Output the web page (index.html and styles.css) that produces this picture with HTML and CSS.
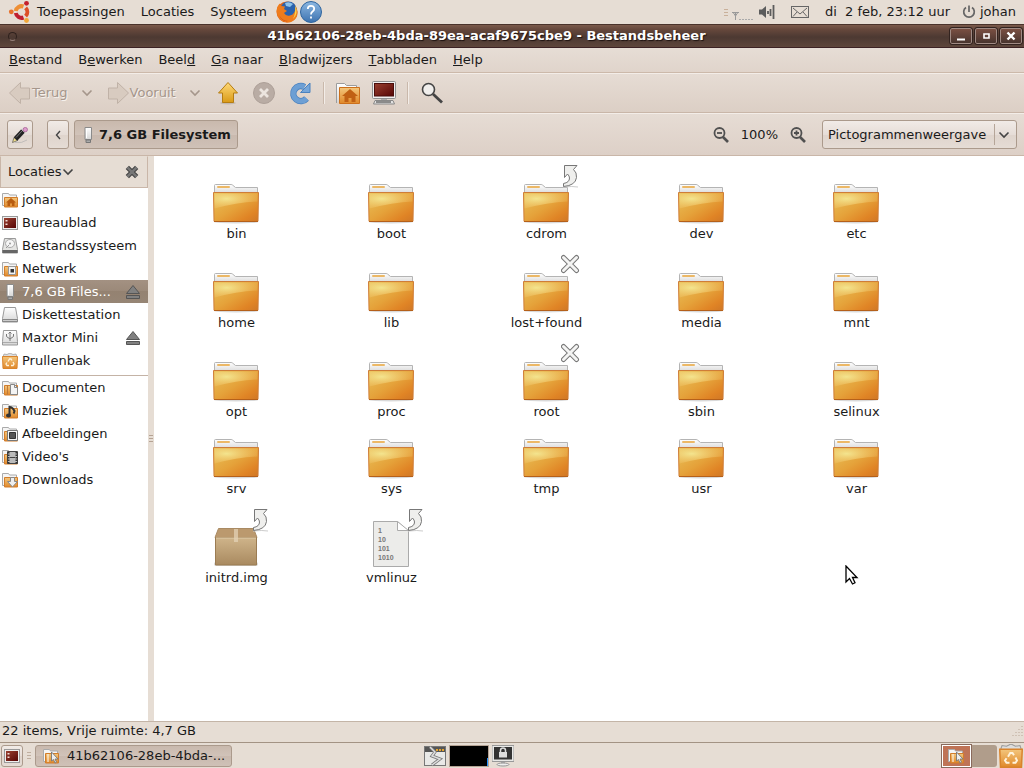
FILE: index.html
```html
<!DOCTYPE html>
<html lang="nl">
<head>
    <meta charset="UTF-8">
    <meta name="viewport" content="width=device-width, initial-scale=1.0">
    <title>Bestandsbeheer</title>
    <link rel="stylesheet" href="styles.css">
</head>
<body>
    <!-- shared icons -->
    <svg class="defs" aria-hidden="true">
        <defs>
            <linearGradient id="gFolder" x1="0" y1="0" x2="1" y2="1">
                <stop offset="0" stop-color="#e9c25a"/>
                <stop offset="0.5" stop-color="#e5a23a"/>
                <stop offset="0.8" stop-color="#e08425"/>
                <stop offset="1" stop-color="#cf7726"/>
            </linearGradient>
            <radialGradient id="gShine" cx="0.28" cy="0.35" r="0.75">
                <stop offset="0" stop-color="#f4e792" stop-opacity="0.95"/>
                <stop offset="1" stop-color="#f2c46a" stop-opacity="0.25"/>
            </radialGradient>
            <linearGradient id="gPaper" x1="0" y1="0" x2="0" y2="1">
                <stop offset="0" stop-color="#ffffff"/>
                <stop offset="1" stop-color="#d6d6d6"/>
            </linearGradient>
            <linearGradient id="gOrange" x1="0" y1="0" x2="0" y2="1">
                <stop offset="0" stop-color="#f3c67c"/>
                <stop offset="1" stop-color="#e0882a"/>
            </linearGradient>
            <linearGradient id="gBox" x1="0" y1="0" x2="0" y2="1">
                <stop offset="0" stop-color="#cfb48a"/>
                <stop offset="1" stop-color="#a98a60"/>
            </linearGradient>
            <linearGradient id="gRed" x1="0" y1="0" x2="1" y2="1">
                <stop offset="0" stop-color="#9a4030"/>
                <stop offset="1" stop-color="#560505"/>
            </linearGradient>
            <linearGradient id="gGold" x1="0" y1="0" x2="0" y2="1">
                <stop offset="0" stop-color="#ffd978"/>
                <stop offset="1" stop-color="#d99a17"/>
            </linearGradient>
            <linearGradient id="gBlue" x1="0" y1="0" x2="0" y2="1">
                <stop offset="0" stop-color="#8db8e2"/>
                <stop offset="1" stop-color="#3d73b0"/>
            </linearGradient>
        </defs>

        <symbol id="folder" viewBox="1 0 48 48">
            <ellipse cx="24" cy="46" rx="22" ry="1.500" fill="#000" opacity="0.15"/>
            <path d="M2.500 18V9.500q0-1 1-1h15.500q1 0 1.500.5l3 2.500h22v7z" fill="url(#gPaper)" stroke="#b4b4b4"/>
            <rect x="5" y="10" width="13" height="2" rx="1" fill="#ecb866"/>
            <path d="M1.500 16.500h45l-.5 28.500q0 .5-.5.500h-43q-.5 0-.5-.5z" fill="url(#gFolder)" stroke="#cf7d38"/>
            <path d="M2.500 17.500h43v8q-20 1-43 7z" fill="url(#gShine)"/>
            <path d="M2 45.500h44" stroke="#b5601a"/>
        </symbol>
        <symbol id="emblemLink" viewBox="0 0 24 24">
            <path d="M2 23q10-1 15 0" stroke="#ccc" fill="none"/>
            <path d="M3.500 1.500h12.500l-3.500 4q3.500 3 3 8-1 8-13 9v-3q6-1 6-5.500 0-2-2-4l-3 3.500z" fill="#efefed" stroke="#777" stroke-linejoin="round"/>
        </symbol>
        <symbol id="emblemNo" viewBox="0 0 24 24">
            <path d="M2.500 4.500l13 13M15.500 4.500l-13 13" stroke="#777" stroke-width="5" stroke-linecap="round"/>
            <path d="M2.500 4.500l13 13M15.500 4.500l-13 13" stroke="#f4f4f3" stroke-width="3" stroke-linecap="round"/>
        </symbol>
        <symbol id="box" viewBox="1 0 48 48">
            <rect x="2" y="42" width="44" height="4" rx="2" fill="#000" opacity="0.15"/>
            <path d="M6.500 8.500h35l3.500 9H3z" fill="#bb996e" stroke="#a98a63"/>
            <path d="M3.500 17.500h41v27.500h-41z" fill="url(#gBox)" stroke="#9b7c53"/>
            <path d="M4 18h40" stroke="#e0cca9"/>
            <path d="M22 9h4v13h-4z" fill="#e3d2b5" opacity="0.75"/>
        </symbol>

        <symbol id="chevron" viewBox="0 0 12 12">
            <path d="M1.500 3.500L6 8l4.500-4.500" fill="none" stroke="currentColor" stroke-width="1.600"/>
        </symbol>
        <symbol id="eject" viewBox="0 0 16 16">
            <path d="M8 1.500L14.500 9.500h-13zM1.500 11.500h13v3h-13z" fill="#808080" stroke="#555"/>
        </symbol>
        <symbol id="miniFolder" viewBox="0 0 16 16">
            <path d="M.5 13.500v-12h6l1 1.500h7v10.500z" fill="#f5f5f5" stroke="#aaa"/>
            <path d="M2.500 5.500h13v9.500h-13z" fill="url(#gOrange)" stroke="#d27d2b"/>
        </symbol>
        <symbol id="home" viewBox="0 0 16 16">
            <use href="#miniFolder"/>
            <path d="M9 6l5 4.500h-1.500V14h-2.500v-2.500H8V14H5.500v-3.500H4z" fill="#b85c10"/>
        </symbol>
        <symbol id="desktop" viewBox="0 0 16 16">
            <rect x=".5" y="1.500" width="15" height="13" fill="#eee" stroke="#999"/>
            <rect x="2" y="3" width="12" height="10" fill="url(#gRed)"/>
            <path d="M3.500 5h2v1.500h-2zM3.500 8.500h2V10h-2z" fill="#f0dcd6"/>
        </symbol>
        <symbol id="disk" viewBox="0 0 16 16">
            <path d="M2.500.5h11l2 11v3.500H.5v-3.500z" fill="#e4e4e2" stroke="#999"/>
            <ellipse cx="8" cy="5.500" rx="4.500" ry="4" fill="#f6f6f6" stroke="#aaa"/>
            <circle cx="8" cy="5.500" r="1" fill="#999"/>
            <path d="M4 10l3-3" stroke="#999"/>
            <path d="M.5 12h15v3H.5z" fill="#666"/>
        </symbol>
        <symbol id="network" viewBox="0 0 16 16">
            <use href="#miniFolder"/>
            <path d="M6.500 5.500h7v8h-7z" fill="#f4f4f4" stroke="#999"/>
            <path d="M8.500 8h3.500v3.500H8.500z" fill="#333"/>
        </symbol>
        <symbol id="usb" viewBox="0 0 16 16">
            <path d="M5 .5h6.500v12H5z" fill="url(#gPaper)" stroke="#8b8b8b"/>
            <path d="M6 13h4.500v2.500H6z" fill="#aaa" stroke="#777"/>
            <path d="M6.500 2v9" stroke="#fff"/>
        </symbol>
        <symbol id="floppy" viewBox="0 0 16 16">
            <path d="M2.500.5h11l2 11v3.500H.5v-3.500z" fill="url(#gPaper)" stroke="#999"/>
            <path d="M.5 12.500h15v2H.5z" fill="#ccc" stroke="#888"/>
        </symbol>
        <symbol id="usbDisk" viewBox="0 0 16 16">
            <path d="M1.500.5h13l1 11v3.500H.5v-3.500z" fill="url(#gPaper)" stroke="#999"/>
            <path d="M8 11V2.500M4.500 4v2.500L8 9l3.500-2.500V4M6.500 3.500L8 2l1.500 1.500" fill="none" stroke="#777"/>
            <path d="M1 12.500h14" stroke="#aaa"/>
        </symbol>
        <symbol id="trash" viewBox="0 0 16 16">
            <path d="M1 4L2 1l3 .5L8 0l3 1.500L14 1l1 3z" fill="#ddd" stroke="#999" stroke-width=".7"/>
            <path d="M.5 3.500h15l-.5 12H1z" fill="url(#gOrange)" stroke="#d9842c"/>
            <path d="M6 8.500l1.500-2.500h1.500l1 1.500M11 9l1 2-1 1.500H9M7 12.500H5L4 11l1-1.500" fill="none" stroke="#fff3dc" stroke-width="1.300"/>
        </symbol>
        <symbol id="documents" viewBox="0 0 16 16">
            <use href="#miniFolder"/>
            <path d="M5.500 5.500v9" stroke="#c07a3a"/>
            <path d="M8.500 4.500h4l3 3v7h-7z" fill="#f4f4f4" stroke="#888"/>
            <path d="M12.500 4.500v3h3" fill="none" stroke="#888"/>
        </symbol>
        <symbol id="music" viewBox="0 0 16 16">
            <use href="#miniFolder"/>
            <path d="M7.500 12.500V4q3 0 5 4-.5 2-1 2.500" fill="none" stroke="#333" stroke-width="2"/>
            <ellipse cx="6.500" cy="12.500" rx="2.500" ry="2" fill="#333"/>
        </symbol>
        <symbol id="pictures" viewBox="0 0 16 16">
            <use href="#miniFolder"/>
            <path d="M5.500 4.500h10v10h-10z" fill="#f4f4f4" stroke="#777"/>
            <path d="M7.500 6.500h6v6h-6z" fill="#555" stroke="#333"/>
        </symbol>
        <symbol id="videos" viewBox="0 0 16 16">
            <use href="#miniFolder"/>
            <path d="M5.500 2.500h10v12h-10z" fill="#bbb" stroke="#444"/>
            <path d="M6.500 3v12M14.500 3v12" stroke="#333" stroke-width="2" stroke-dasharray="1.500 1"/>
            <path d="M8 8.500h5" stroke="#444"/>
        </symbol>
        <symbol id="downloads" viewBox="0 0 16 16">
            <use href="#miniFolder"/>
            <path d="M8.500 5.500h4v4h3l-5 5.500-5-5.500h3z" fill="#eee" stroke="#888"/>
        </symbol>
        <symbol id="fileTask" viewBox="0 0 16 16">
            <use href="#miniFolder"/>
            <path d="M5 6v8" stroke="#fff"/>
            <path d="M8.500 4v9l2-1.500 1.500 3.500 1.500-.8-1.500-3.200h3z" fill="#eee" stroke="#777" stroke-width=".9"/>
        </symbol>
    </svg>

    <header class="panel top-panel">
        <nav class="panel-menu">
            <svg class="icon-24" viewBox="0 0 24 24" aria-hidden="true">
                <g fill="none" stroke-width="4">
                    <path d="M7.800 11A5.800 5.800 0 0 1 15.500 6.500" stroke="#ee8f35"/>
                    <path d="M17.600 7.900A5.800 5.800 0 0 1 17.600 16.100" stroke="#dd4f26"/>
                    <path d="M15.500 17.500A5.800 5.800 0 0 1 7.800 13" stroke="#c01f30"/>
                </g>
                <circle cx="3.300" cy="11.800" r="2.400" fill="#e8702a"/>
                <circle cx="18.500" cy="3.300" r="2.400" fill="#c4202c"/>
                <circle cx="18.500" cy="20.500" r="2.400" fill="#f2a83a"/>
            </svg>
            <button class="menu-item">Toepassingen</button>
            <button class="menu-item">Locaties</button>
            <button class="menu-item">Systeem</button>
            <button class="launcher" aria-label="Firefox">
                <svg class="icon-24" viewBox="0 0 24 24" aria-hidden="true">
                    <circle cx="12" cy="12" r="10.500" fill="#e0661a"/>
                    <circle cx="13.500" cy="9.500" r="8" fill="#2c62ac"/>
                    <path d="M10 3q4-2 8 1l-3 3-4-1z" fill="#8fc2e8"/>
                    <path d="M1.500 11Q2 6 4.500 3.500L6 6l4 .5-1 2.500 3 2-3 2q2 3.500 6 2.500 5-1 5.500-8 3 4 1.500 9-3 6-10 6-9-1-10.500-11.500z" fill="#ef7c1c"/>
                    <path d="M20 5q4 8-2 14 3-6 2-14z" fill="#fbd34a"/>
                    <path d="M4 15q3 6 9 6-6 1-9-6z" fill="#b8321a"/>
                </svg>
            </button>
            <button class="launcher" aria-label="Help">
                <svg class="icon-24" viewBox="0 0 24 24" aria-hidden="true">
                    <circle cx="12" cy="12" r="10.500" fill="url(#gBlue)" stroke="#2f659f"/>
                    <path d="M8.800 9q0-3.200 3.200-3.200t3.200 3q0 1.700-1.600 2.700T12 14.500M12 16.500v2" fill="none" stroke="#fff" stroke-width="1.800"/>
                </svg>
            </button>
        </nav>
        <div class="tray">
            <svg class="tray-net" viewBox="0 0 32 24" aria-hidden="true">
                <path d="M1 9.500h4M1 12.500h4M1 15.500h4" stroke="#c9b09a"/>
                <path d="M9 12.500h7M10.500 13l2 3 2-3M12.500 12v8" fill="none" stroke="#999"/>
                <path d="M16 19.500h14" stroke="#aaa" stroke-dasharray="2 1"/>
            </svg>
            <svg class="icon-16" viewBox="0 0 16 16" aria-hidden="true">
                <path d="M0 5.500h3L7 2v12L3 10.500H0z" fill="#5c5c5c"/>
                <path d="M9 7v3M11.500 5v7M14.500 1v14" stroke="#5c5c5c" stroke-width="1.800"/>
            </svg>
            <svg class="tray-mail" viewBox="0 0 18 12" aria-hidden="true">
                <rect x=".5" y=".5" width="17" height="11" fill="none" stroke="#666"/>
                <path d="M2 2l7 6 7-6M2 10.500l4-4.500M16 10.500L12 6" fill="none" stroke="#666"/>
            </svg>
            <time class="clock">di  2 feb, 23:12 uur</time>
            <button class="user-menu">
                <svg class="user-icon" viewBox="0 0 14 14" aria-hidden="true">
                    <path d="M4 2.500a5.300 5.300 0 1 0 6 0M7 .5v6.500" fill="none" stroke="#666" stroke-width="1.700"/>
                </svg>
                johan
            </button>
        </div>
    </header>

    <div class="window">
        <div class="title-bar">
            <span class="title-dot"></span>
            <h1>41b62106-28eb-4bda-89ea-acaf9675cbe9 - Bestandsbeheer</h1>
            <div class="window-buttons">
                <button aria-label="Minimaliseren"><svg viewBox="0 0 20 14"><path d="M6 10.500h8" stroke="#fff" stroke-width="2"/></svg></button>
                <button aria-label="Maximaliseren"><svg viewBox="0 0 20 14"><path d="M8 5h5v4H8z" fill="none" stroke="#fff" stroke-width="1.600"/></svg></button>
                <button aria-label="Sluiten"><svg viewBox="0 0 20 14"><path d="M6.500 3.500l7 7M13.500 3.500l-7 7" stroke="#fff" stroke-width="2.400"/></svg></button>
            </div>
        </div>

        <nav class="menu-bar">
            <button class="menu-item"><u>B</u>estand</button>
            <button class="menu-item">B<u>e</u>werken</button>
            <button class="menu-item">Beel<u>d</u></button>
            <button class="menu-item"><u>G</u>a naar</button>
            <button class="menu-item"><u>B</u>ladwijzers</button>
            <button class="menu-item"><u>T</u>abbladen</button>
            <button class="menu-item"><u>H</u>elp</button>
        </nav>

        <div class="tool-bar">
            <button class="nav-button" disabled>
                <svg class="icon-24" viewBox="0 0 24 24" aria-hidden="true">
                    <path d="M1.500 12L12.500 1.500v5.500h9v11h-9V22.500z" fill="#d8cbc0" stroke="#c0b2a7"/>
                </svg>
                Terug
            </button>
            <button class="drop-button" aria-label="Terug-geschiedenis" disabled><svg class="icon-12"><use href="#chevron"/></svg></button>
            <button class="nav-button" disabled>
                <svg class="icon-24" viewBox="0 0 24 24" aria-hidden="true">
                    <path d="M22.500 12L11.500 1.500v5.500h-9v11h9V22.500z" fill="#d8cbc0" stroke="#c0b2a7"/>
                </svg>
                Vooruit
            </button>
            <button class="drop-button" aria-label="Vooruit-geschiedenis" disabled><svg class="icon-12"><use href="#chevron"/></svg></button>
            <button class="tool-button" aria-label="Omhoog">
                <svg class="icon-24" viewBox="0 0 24 24" aria-hidden="true">
                    <ellipse cx="12" cy="22" rx="8" ry="1.500" opacity="0.12"/>
                    <path d="M12 1.500l9.500 10.500h-4v9.500h-11V12h-4z" fill="url(#gGold)" stroke="#b57d12" stroke-linejoin="round"/>
                </svg>
            </button>
            <button class="tool-button" aria-label="Stoppen" disabled>
                <svg class="icon-24" viewBox="0 0 24 24" aria-hidden="true">
                    <circle cx="12" cy="12" r="10.500" fill="#b9aca4" stroke="#ada098"/>
                    <path d="M8 8l8 8M16 8l-8 8" stroke="#ece5df" stroke-width="2.800"/>
                </svg>
            </button>
            <button class="tool-button" aria-label="Herladen">
                <svg class="icon-24" viewBox="0 0 24 24" aria-hidden="true">
                    <path d="M18.500 17.500A7.500 7.500 0 1 1 16.500 6" fill="none" stroke="#4b82bf" stroke-width="6.500"/>
                    <path d="M18.500 17.500A7.500 7.500 0 1 1 16.500 6" fill="none" stroke="#6d9fd4" stroke-width="5"/>
                    <path d="M22 2v9.500h-9.500z" fill="#76a6d9" stroke="#4b82bf"/>
                </svg>
            </button>
            <span class="separator"></span>
            <button class="tool-button" aria-label="Persoonlijke map">
                <svg class="icon-24" viewBox="0 0 24 24" aria-hidden="true">
                    <path d="M.5 22V2.500h8l2 2h10v4" fill="url(#gPaper)" stroke="#9c9c9c"/>
                    <path d="M3.500 6.500h20v16h-20z" fill="url(#gOrange)" stroke="#cc701c"/>
                    <path d="M14 8l8 7h-2.500v6h-4v-4h-3v4h-4v-6H6z" fill="#c06014"/>
                </svg>
            </button>
            <button class="tool-button" aria-label="Computer">
                <svg class="icon-24" viewBox="0 0 24 24" aria-hidden="true">
                    <rect x=".5" y=".5" width="23" height="17" rx="1" fill="#efefef" stroke="#8f8f8f"/>
                    <rect x="2.500" y="2.500" width="19" height="12.500" fill="url(#gRed)" stroke="#4b0d0a"/>
                    <path d="M9 18h6v2H9z" fill="#aaa"/>
                    <path d="M3 19.500h18l1.500 3.500h-21z" fill="#e3e3e3" stroke="#888"/>
                    <path d="M4 21h15" stroke="#333"/>
                </svg>
            </button>
            <span class="separator"></span>
            <button class="tool-button" aria-label="Zoeken">
                <svg class="icon-24" viewBox="0 0 24 24" aria-hidden="true">
                    <path d="M13 13l9 8.500" stroke="#444" stroke-width="2.800"/>
                    <circle cx="8.500" cy="8.500" r="6" fill="#f0eeec" stroke="#444" stroke-width="1.600"/>
                </svg>
            </button>
        </div>

        <div class="location-bar">
            <button class="raised edit-button" aria-label="Locatie bewerken">
                <svg class="icon-16" viewBox="0 0 16 16" aria-hidden="true">
                    <path d="M3 15.500q7 1 12-2.500" stroke="#aaa" fill="none" opacity=".6"/>
                    <path d="M.5 15.500L2 10.500l3.500 3z" fill="#f2e08a" stroke="#555" stroke-width=".7"/>
                    <path d="M3.500 12L11 4" stroke="#222" stroke-width="4.800"/>
                    <path d="M4 10.500l6.500-7" stroke="#777"/>
                    <path d="M11 4l1-1.200" stroke="#ddd" stroke-width="4.500"/>
                    <circle cx="13.300" cy="2.600" r="2.200" fill="#dc9ccb" stroke="#a0578f" stroke-width=".7"/>
                </svg>
            </button>
            <button class="raised step-button" aria-label="Vorige map">
                <svg class="icon-12" viewBox="0 0 12 12" aria-hidden="true"><path d="M8 2L4.500 6 8 10" fill="none" stroke="#444" stroke-width="1.400"/></svg>
            </button>
            <button class="raised pressed path-button">
                <svg class="icon-16"><use href="#usb"/></svg>
                7,6 GB Filesystem
            </button>
            <div class="zoom">
                <button aria-label="Uitzoomen"><svg class="icon-16" viewBox="0 0 16 16"><path d="M10 10l5 5" stroke="#505050" stroke-width="2.600"/><circle cx="6.500" cy="6" r="5" fill="none" stroke="#505050" stroke-width="1.800"/><path d="M4 6h5" stroke="#505050" stroke-width="1.800"/></svg></button>
                <output>100%</output>
                <button aria-label="Inzoomen"><svg class="icon-16" viewBox="0 0 16 16"><path d="M10 10l5 5" stroke="#505050" stroke-width="2.600"/><circle cx="6.500" cy="6" r="5" fill="none" stroke="#505050" stroke-width="1.800"/><path d="M4 6h5M6.500 3.500v5" stroke="#505050" stroke-width="1.800"/></svg></button>
            </div>
            <div class="raised view-select">
                <select aria-label="Weergave">
                    <option>Pictogrammenweergave</option>
                    <option>Lijstweergave</option>
                    <option>Compacte weergave</option>
                </select>
                <svg class="icon-12" aria-hidden="true"><use href="#chevron"/></svg>
            </div>
        </div>

        <div class="content">
            <aside class="sidebar">
                <div class="sidebar-header">
                    <button class="sidebar-title">Locaties<svg class="icon-12"><use href="#chevron"/></svg></button>
                    <button class="sidebar-close" aria-label="Zijpaneel sluiten">
                        <svg viewBox="0 0 12 12"><path d="M2 2l8 8M10 2l-8 8" stroke="#444" stroke-width="4"/><path d="M2 2l8 8M10 2l-8 8" stroke="#777" stroke-width="2.200"/></svg>
                    </button>
                </div>
                <ul class="places">
                    <li><svg class="icon-16"><use href="#home"/></svg><a href="#">johan</a></li>
                    <li><svg class="icon-16"><use href="#desktop"/></svg><a href="#">Bureaublad</a></li>
                    <li><svg class="icon-16"><use href="#disk"/></svg><a href="#">Bestandssysteem</a></li>
                    <li><svg class="icon-16"><use href="#network"/></svg><a href="#">Netwerk</a></li>
                    <li class="selected"><svg class="icon-16"><use href="#usb"/></svg><a href="#">7,6 GB Files...</a><button aria-label="Uitwerpen"><svg class="icon-16"><use href="#eject"/></svg></button></li>
                    <li><svg class="icon-16"><use href="#floppy"/></svg><a href="#">Diskettestation</a></li>
                    <li><svg class="icon-16"><use href="#usbDisk"/></svg><a href="#">Maxtor Mini</a><button aria-label="Uitwerpen"><svg class="icon-16"><use href="#eject"/></svg></button></li>
                    <li><svg class="icon-16"><use href="#trash"/></svg><a href="#">Prullenbak</a></li>
                </ul>
                <ul class="places bookmarks">
                    <li><svg class="icon-16"><use href="#documents"/></svg><a href="#">Documenten</a></li>
                    <li><svg class="icon-16"><use href="#music"/></svg><a href="#">Muziek</a></li>
                    <li><svg class="icon-16"><use href="#pictures"/></svg><a href="#">Afbeeldingen</a></li>
                    <li><svg class="icon-16"><use href="#videos"/></svg><a href="#">Video's</a></li>
                    <li><svg class="icon-16"><use href="#downloads"/></svg><a href="#">Downloads</a></li>
                </ul>
            </aside>
            <div class="splitter"><span class="grip"></span></div>
            <main class="files">
                <a class="file" href="#"><span class="file-icon"><svg><use href="#folder"/></svg></span>bin</a>
                <a class="file" href="#"><span class="file-icon"><svg><use href="#folder"/></svg></span>boot</a>
                <a class="file has-emblem" href="#"><span class="file-icon"><svg><use href="#folder"/></svg><svg class="emblem"><use href="#emblemLink"/></svg></span>cdrom</a>
                <a class="file" href="#"><span class="file-icon"><svg><use href="#folder"/></svg></span>dev</a>
                <a class="file" href="#"><span class="file-icon"><svg><use href="#folder"/></svg></span>etc</a>
                <a class="file" href="#"><span class="file-icon"><svg><use href="#folder"/></svg></span>home</a>
                <a class="file" href="#"><span class="file-icon"><svg><use href="#folder"/></svg></span>lib</a>
                <a class="file has-emblem" href="#"><span class="file-icon"><svg><use href="#folder"/></svg><svg class="emblem"><use href="#emblemNo"/></svg></span>lost+found</a>
                <a class="file" href="#"><span class="file-icon"><svg><use href="#folder"/></svg></span>media</a>
                <a class="file" href="#"><span class="file-icon"><svg><use href="#folder"/></svg></span>mnt</a>
                <a class="file" href="#"><span class="file-icon"><svg><use href="#folder"/></svg></span>opt</a>
                <a class="file" href="#"><span class="file-icon"><svg><use href="#folder"/></svg></span>proc</a>
                <a class="file has-emblem" href="#"><span class="file-icon"><svg><use href="#folder"/></svg><svg class="emblem"><use href="#emblemNo"/></svg></span>root</a>
                <a class="file" href="#"><span class="file-icon"><svg><use href="#folder"/></svg></span>sbin</a>
                <a class="file" href="#"><span class="file-icon"><svg><use href="#folder"/></svg></span>selinux</a>
                <a class="file" href="#"><span class="file-icon"><svg><use href="#folder"/></svg></span>srv</a>
                <a class="file" href="#"><span class="file-icon"><svg><use href="#folder"/></svg></span>sys</a>
                <a class="file" href="#"><span class="file-icon"><svg><use href="#folder"/></svg></span>tmp</a>
                <a class="file" href="#"><span class="file-icon"><svg><use href="#folder"/></svg></span>usr</a>
                <a class="file" href="#"><span class="file-icon"><svg><use href="#folder"/></svg></span>var</a>
                <a class="file has-emblem" href="#"><span class="file-icon"><svg><use href="#box"/></svg><svg class="emblem"><use href="#emblemLink"/></svg></span>initrd.img</a>
                <a class="file has-emblem" href="#">
                    <span class="file-icon">
                        <svg viewBox="1 0 48 48">
                            <path d="M6.500 1.500h24l11 10v35h-35z" fill="#ececea" stroke="#aaa"/>
                            <path d="M30.500 1.500v9h11z" fill="#fff" stroke="#aaa"/>
                            <g class="bits">
                                <text x="11" y="13">1</text>
                                <text x="11" y="22">10</text>
                                <text x="11" y="31">101</text>
                                <text x="11" y="40">1010</text>
                            </g>
                        </svg>
                        <svg class="emblem"><use href="#emblemLink"/></svg>
                    </span>
                    vmlinuz
                </a>
                <svg class="pointer" viewBox="0 0 14 20" aria-hidden="true">
                    <path d="M1 1v16l3.500-3.500L7.500 19l2.500-1.200-2.500-5.300H12z" fill="#fff" stroke="#000" stroke-width="1.300"/>
                </svg>
            </main>
        </div>

        <div class="status-bar">22 items, Vrije ruimte: 4,7 GB
            <svg class="icon-12" viewBox="0 0 12 12" aria-hidden="true"><path d="M10 1v11M7 4v8M4 7v5M1 10v2" stroke="#b9a695" stroke-dasharray="1 2"/></svg>
        </div>
    </div>

    <footer class="panel bottom-panel">
        <button class="raised desktop-button" aria-label="Bureaublad tonen"><svg class="icon-16"><use href="#desktop"/></svg></button>
        <span class="handle"></span>
        <div class="task-list">
            <button class="raised pressed task"><svg class="icon-16"><use href="#fileTask"/></svg>41b62106-28eb-4bda-...</button>
        </div>
        <div class="applets">
            <svg class="applet" viewBox="0 0 22 22" aria-hidden="true">
                <rect x=".5" y="1.500" width="21" height="19" fill="#e9e9e7" stroke="#777"/>
                <path d="M1 2h20v5H1z" fill="#555"/>
                <path d="M12 4h2v2h-2zM15 4h2v2h-2zM18 4h2v2h-2z" fill="#e8a52c"/>
                <path d="M6 2l5 5-3 4 8 3-8 6" fill="none" stroke="#777" stroke-width="3"/>
                <path d="M6 2l5 5-3 4 8 3-8 6" fill="none" stroke="#ddd" stroke-width="1.500"/>
            </svg>
            <div class="load-graph"><span></span></div>
            <svg class="applet" viewBox="0 0 22 22" aria-hidden="true">
                <path d="M0 .5h22v16H0z" fill="#e8e8e6" stroke="#999"/>
                <path d="M2 2h18v12.500H2z" fill="#333"/>
                <path d="M8.500 7V5.500a2.500 2.500 0 0 1 5 0V7" fill="none" stroke="#ddd" stroke-width="1.500"/>
                <path d="M7 7h8v5.500H7z" fill="#ddd"/>
                <path d="M9 17h4v2H9z" fill="#aaa"/>
                <ellipse cx="11" cy="19.500" rx="6" ry="1.500" fill="#eee" stroke="#999"/>
            </svg>
        </div>
        <div class="workspaces">
            <button class="workspace current" aria-label="Werkblad 1"><svg class="icon-16"><use href="#fileTask"/></svg></button>
            <button class="workspace" aria-label="Werkblad 2"></button>
        </div>
        <button class="launcher" aria-label="Prullenbak"><svg class="icon-24"><use href="#trash"/></svg></button>
    </footer>
</body>
</html>
```

FILE: styles.css
```css
* {
    box-sizing: border-box;
}
body {
    margin: 0;
    min-height: 100vh;
    display: flex;
    flex-direction: column;
    font-family: "DejaVu Sans", sans-serif;
    font-size: 13px;
    line-height: 16px;
    color: #1a1a1a;
    background-color: #e6ddd4;
}
button, select {
    margin: 0;
    padding: 0;
    border: none;
    background: none;
    font: inherit;
    color: inherit;
    white-space: nowrap;
}
button {
    display: flex;
    align-items: center;
}
a {
    color: inherit;
    text-decoration: none;
}
svg {
    display: block;
    flex-shrink: 0;
}
.defs {
    position: absolute;
    width: 0;
    height: 0;
}
.icon-12 {
    width: 12px;
    height: 12px;
}
.icon-16 {
    width: 16px;
    height: 16px;
}
.icon-24 {
    width: 24px;
    height: 24px;
}

/* panels */
.panel {
    display: flex;
    align-items: center;
    background-color: #e6ddd4;
}
.top-panel {
    height: 24px;
    justify-content: space-between;
    padding: 0 8px;
}
.panel-menu, .tray {
    display: flex;
    align-items: center;
}
.menu-item {
    padding: 0 8px;
    height: 22px;
}
.panel-menu .menu-item {
    padding-bottom: 1px;
}
.panel-menu .menu-item:first-of-type {
    padding-left: 5px;
}
.panel-menu {
    padding-right: 1px;
}
.tray-net {
    width: 32px;
    height: 24px;
    margin-right: 4px;
}
.tray-mail {
    width: 18px;
    height: 12px;
    margin: 0 16px;
}
.clock {
    white-space: pre;
}
.user-menu {
    margin-left: 12px;
    gap: 4px;
}
.user-icon {
    width: 14px;
    height: 14px;
}

/* window */
.window {
    flex: 1;
    display: flex;
    flex-direction: column;
}
.title-bar {
    display: flex;
    align-items: center;
    height: 24px;
    padding: 0 2px 0 8px;
    border-top: 1px solid #4a332b;
    border-bottom: 1px solid #3c2224;
    background-image: linear-gradient(#7b5a4b, #66483c 20%, #4c3932 55%, #5e463b);
}
.title-dot {
    width: 9px;
    height: 9px;
    border: 1px solid #2f211d;
    border-bottom-color: #96807a;
    border-radius: 5px;
}
.title-bar h1 {
    flex: 1;
    margin: 0;
    padding-left: 6px;
    font-size: 13px;
    font-weight: bold;
    text-align: center;
    color: #fff;
    text-shadow: 1px 1px 1px #1d1210;
}
.window-buttons {
    display: flex;
    gap: 3px;
}
.window-buttons button {
    width: 22px;
    height: 16px;
    border: 1px solid #a08a83;
    border-radius: 2px;
    outline: 1px solid #33231f;
    background-image: linear-gradient(#7a4f42, #48342e);
}
.window-buttons svg {
    width: 20px;
    height: 14px;
}
.menu-bar {
    display: flex;
    align-items: center;
    height: 25px;
    padding: 0 1px;
    border-bottom: 1px solid #ccb9aa;
    background-image: linear-gradient(#e6ddd5, #e0d4cb);
}
.tool-bar {
    display: flex;
    align-items: center;
    height: 40px;
    padding-left: 4px;
    border-top: 1px solid #f3ede8;
    border-bottom: 1px solid #c9b6a8;
    background-image: linear-gradient(#e6dcd4, #dccfc5);
}
.nav-button, .drop-button {
    color: #a5968b;
    text-shadow: 1px 1px 0 #f6f1ed;
}
.nav-button {
    margin-left: 4px;
    padding-right: 4px;
}
.drop-button {
    width: 30px;
    justify-content: center;
}
.tool-button {
    width: 36px;
    height: 32px;
    justify-content: center;
}
.separator {
    width: 2px;
    height: 22px;
    margin: 0 5px;
    border-left: 1px solid #c9b8ab;
    border-right: 1px solid #f3ede8;
}

/* location bar */
.location-bar {
    display: flex;
    align-items: center;
    height: 43px;
    padding: 0 7px;
    border-top: 1px solid #f3ede8;
    border-bottom: 1px solid #c9b6a8;
    background-image: linear-gradient(#e6dcd4, #ddd0c7);
}
.raised {
    height: 29px;
    border: 1px solid #ab9a8c;
    border-radius: 3px;
    background-image: linear-gradient(#f1ebe7, #e6ddd7 50%, #dfd4cc 50%, #e5dcd5);
}
.pressed {
    background-image: linear-gradient(#c9b9ad, #d1c3b9 50%, #c9b9ae 50%, #cfc1b7);
}
.edit-button {
    width: 26px;
    justify-content: center;
}
.step-button {
    width: 22px;
    margin: 0 5px 0 14px;
    justify-content: center;
}
.path-button {
    padding: 0 6px 0 5px;
    gap: 3px;
    font-weight: bold;
}
.zoom {
    display: flex;
    align-items: center;
    gap: 12px;
    margin: 0 16px 0 auto;
}
.view-select {
    display: flex;
    align-items: center;
    position: relative;
}
.view-select select {
    width: 193px;
    height: 27px;
    padding: 0 26px 0 5px;
    appearance: none;
}
.view-select svg {
    position: absolute;
    right: 6px;
    color: #444;
    pointer-events: none;
}
.view-select::after {
    content: "";
    position: absolute;
    right: 21px;
    top: 3px;
    bottom: 3px;
    border-left: 1px solid #b5a598;
}

/* content */
.content {
    flex: 1;
    display: flex;
    background-color: #fff;
}
.sidebar {
    width: 148px;
}
.sidebar-header {
    display: flex;
    align-items: center;
    justify-content: space-between;
    height: 32px;
    padding: 0 8px 0 7px;
    border: 1px solid #c9b6a8;
    border-top-color: #e6ddd4;
    background-color: #e6ddd4;
}
.sidebar-title svg {
    color: #444;
}
.sidebar-close svg {
    width: 14px;
    height: 14px;
}
.places {
    margin: 0;
    padding: 0;
    list-style: none;
}
.places li {
    display: flex;
    align-items: center;
    gap: 4px;
    height: 23px;
    padding: 0 7px 0 2px;
}
.places a {
    flex: 1;
    white-space: nowrap;
}
.places .selected {
    color: #fff;
    background-image: linear-gradient(#a39182, #9b8979 50%, #948271 50%, #968575);
}
.bookmarks {
    margin-top: 3px;
    border-top: 1px solid #c4b3a6;
}
.splitter {
    display: flex;
    align-items: center;
    width: 6px;
    background-color: #e6ddd4;
}
.grip {
    width: 4px;
    height: 7px;
    margin-left: 1px;
    background-image: repeating-linear-gradient(#b5a394 0 1px, transparent 1px 3px);
}
.files {
    flex: 1;
    position: relative;
    display: grid;
    grid-template-columns: repeat(auto-fill, 155px);
    align-content: start;
    align-items: end;
    row-gap: 11px;
    padding: 8px 0 8px 5px;
}
.file {
    display: flex;
    flex-direction: column;
    align-items: center;
    gap: 2px;
}
.has-emblem {
    padding-top: 12px;
}
.file-icon {
    position: relative;
}
.file-icon svg {
    width: 48px;
    height: 48px;
}
.file-icon .emblem {
    position: absolute;
    top: -12px;
    right: -14px;
    width: 24px;
    height: 24px;
}
.bits {
    font: bold 7px "Liberation Sans", sans-serif;
    fill: #777;
}
.pointer {
    position: absolute;
    left: 691px;
    top: 409px;
    width: 14px;
    height: 20px;
}
.status-bar {
    display: flex;
    align-items: center;
    justify-content: space-between;
    height: 21px;
    padding: 0 0 2px 2px;
    border-top: 1px solid #c4b5a7;
}

/* bottom panel */
.bottom-panel {
    height: 26px;
    padding: 0 1px;
    border-top: 1px solid #a39384;
}
.bottom-panel .raised {
    height: 22px;
}
.desktop-button {
    width: 22px;
    justify-content: center;
}
.handle {
    width: 4px;
    height: 7px;
    margin: 0 4px;
    background-image: repeating-linear-gradient(#bfae9f 0 1px, transparent 1px 3px);
}
.task-list {
    width: 389px;
}
.task {
    width: 197px;
    padding: 0 7px;
    gap: 8px;
}
.applets {
    display: flex;
    align-items: center;
    gap: 3px;
    margin-right: auto;
}
.applet {
    width: 22px;
    height: 22px;
}
.load-graph {
    display: flex;
    justify-content: flex-end;
    align-items: flex-end;
    width: 40px;
    height: 22px;
    border: 1px solid #b5a394;
    background-color: #000;
}
.load-graph span {
    width: 1px;
    height: 8px;
    background-color: #1e90ff;
}
.workspaces {
    display: flex;
    width: 55px;
    height: 22px;
    margin-right: 2px;
    border-radius: 3px;
    background-color: #b09d8b;
}
.workspace {
    flex: 1;
    justify-content: center;
}
.current {
    border: 1px solid #fff;
    outline: 1px solid #8a6a5c;
    background-color: #bf7356;
}
```
